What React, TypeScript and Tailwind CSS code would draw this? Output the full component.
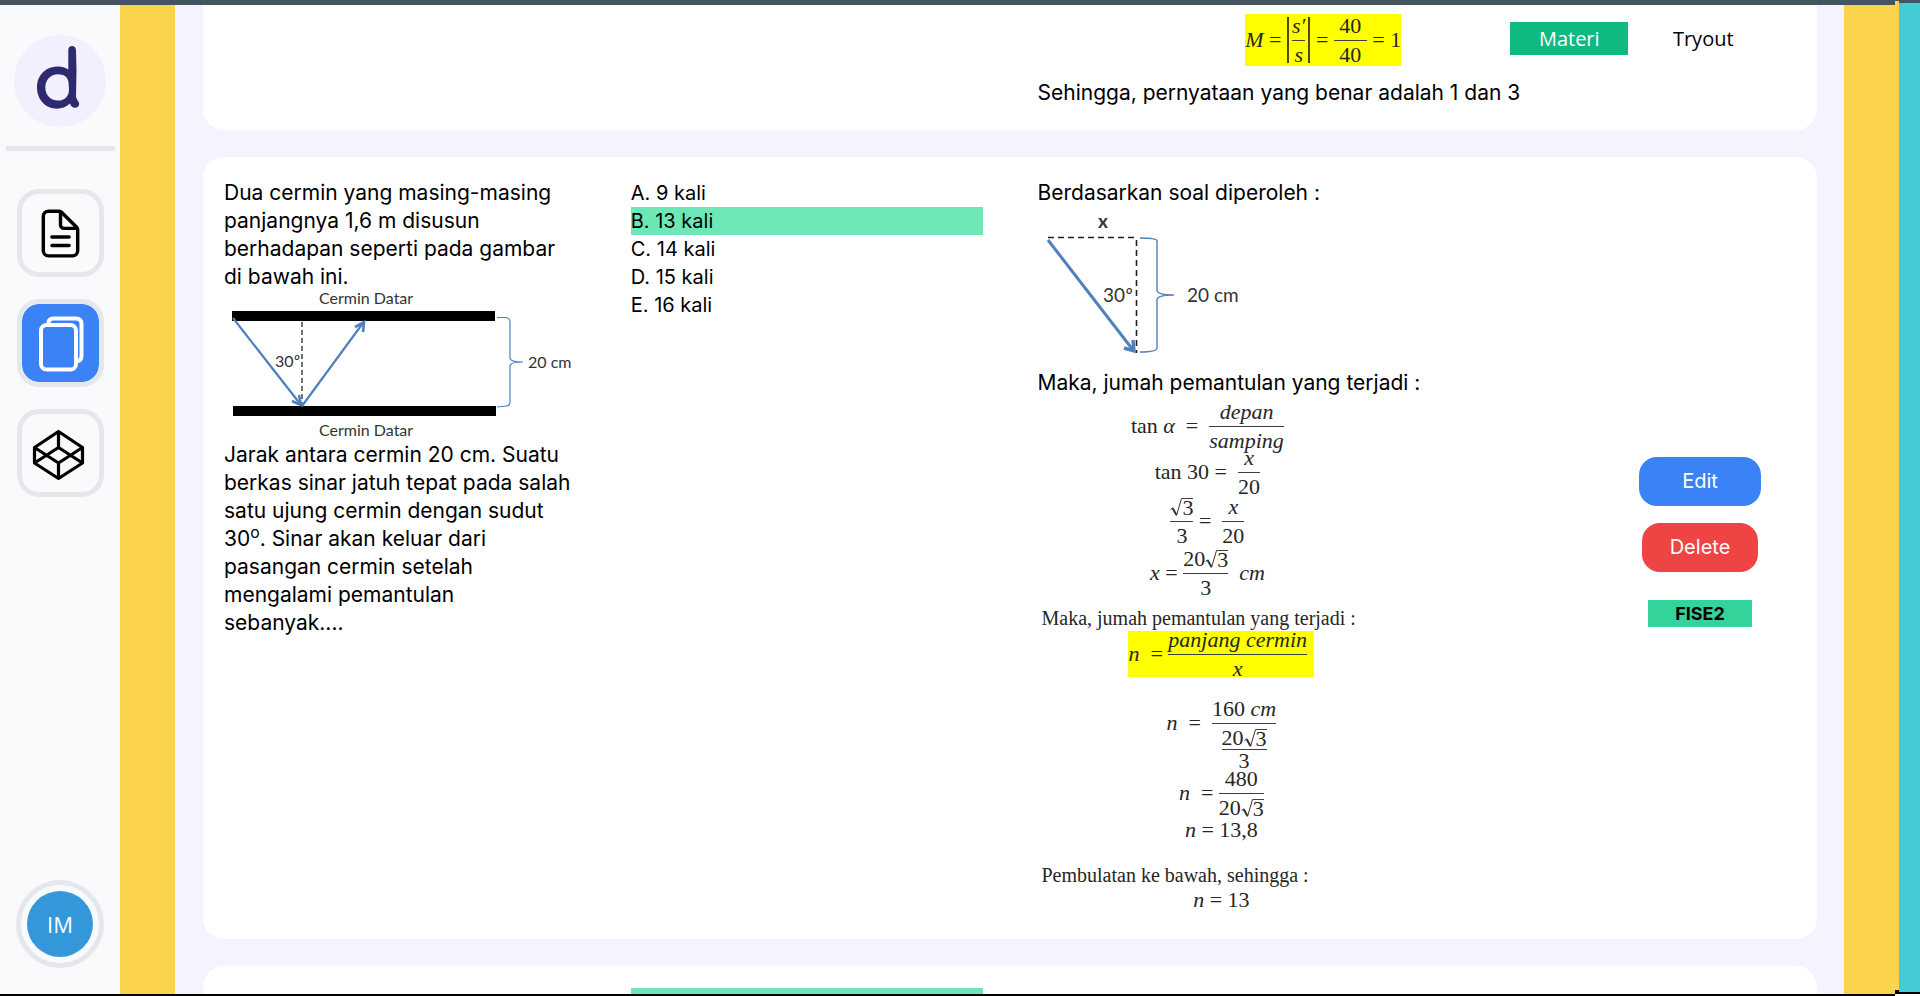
import type { ReactNode } from 'react';
import { IoDocumentTextOutline } from 'react-icons/io5';

function Frac({ top, tight = false, children }: { top: ReactNode; tight?: boolean; children: ReactNode }) {
  return (
    <span className="flex flex-col items-stretch leading-[17px]">
      <span className={`flex items-start justify-center whitespace-pre ${tight ? 'h-5' : 'h-[23px]'}`}>{top}</span>
      <span className={`flex items-start justify-center border-t border-neutral-700 ${tight ? 'pt-[2px]' : 'pt-[5px]'}`}>
        {children}
      </span>
    </span>
  );
}

function Root({ children }: { children: ReactNode }) {
  return (
    <span className="flex items-start">
      <svg viewBox="0 0 12 18" className="h-[18px] w-3" fill="none" stroke="#333" aria-hidden="true">
        <path d="M0.5 11.5 L2.5 10" strokeWidth="1" />
        <path d="M2.5 10 L6.5 17" strokeWidth="2" />
        <path d="M6.5 17.5 L11.5 0.5 H12" strokeWidth="1" />
      </svg>
      <span className="border-t border-neutral-700">{children}</span>
    </span>
  );
}

function Op({ children }: { children: ReactNode }) {
  return <span className="flex h-[46px] items-center whitespace-pre">{children}</span>;
}

function Equation({ tall = false, children }: { tall?: boolean; children: ReactNode }) {
  return (
    <div className={`flex items-start justify-center text-[22px] ${tall ? 'h-[52px] pt-[3px]' : 'h-[46px]'}`}>
      {children}
    </div>
  );
}

function MirrorDiagram() {
  return (
    <svg
      viewBox="224 290 350 150"
      className="block h-[150px] w-[350px] overflow-visible font-[Lato,sans-serif] text-base"
      role="img"
      aria-label="Dua cermin datar berjarak 20 cm"
    >
      <g fill="#333">
        <text x="319" y="303">Cermin Datar</text>
        <text x="319" y="435">Cermin Datar</text>
        <text x="275" y="366">30<tspan fontStyle="italic">º</tspan></text>
        <text x="528" y="367">20 cm</text>
      </g>
      <rect x="232" y="310" width="263" height="10" />
      <rect x="233" y="405" width="263" height="10" />
      <path d="M302 321V405" stroke="#444" strokeWidth="1.5" strokeDasharray="5 3" />
      <g fill="none" stroke="#4f81bd" strokeWidth="2.2">
        <path d="M233 317L301 404M302 405L363 322" />
        <path d="M292 400L301 404L299 394M355 326L364 321L363 331" strokeWidth="2.6" />
        <path d="M497 316.500H506Q510 317 510 321V357Q510 361 523 361Q510 361 510 365V401Q510 405 506 405L497 406" strokeWidth="1.2" />
      </g>
    </svg>
  );
}

function TriangleDiagram() {
  return (
    <svg
      viewBox="1037 206 350 162"
      className="block h-[162px] w-[350px] overflow-visible font-[Lato,sans-serif] text-[19px]"
      role="img"
      aria-label="Segitiga sinar dengan sudut 30 derajat"
    >
      <g fill="#333">
        <text x="1097" y="227" fontWeight="700">x</text>
        <text x="1102" y="301">30<tspan fontStyle="italic">º</tspan></text>
        <text x="1186" y="301">20 cm</text>
      </g>
      <path d="M1047 236.500H1134M1135.500 239V352" stroke="#222" strokeWidth="1.6" strokeDasharray="6 4" fill="none" />
      <g fill="none" stroke="#4f81bd">
        <path d="M1047 239L1132 349" strokeWidth="3" />
        <path d="M1123 347L1133 350L1132 339" strokeWidth="3.400" />
        <path d="M1139 237Q1156 237 1156 240V289Q1156 294 1173 294Q1156 294 1156 299V347Q1156 351 1139 351" strokeWidth="1.400" />
      </g>
    </svg>
  );
}

const answers = ['A. 9 kali', 'B. 13 kali', 'C. 14 kali', 'D. 15 kali', 'E. 16 kali'];
const serif = "font-['Liberation_Serif',serif] leading-[28px] text-neutral-800";
const card = 'grid grid-cols-4 gap-x-[55px] bg-white px-[21px]';
const prose = 'whitespace-nowrap text-[21px]';
const tile = 'flex h-[88px] w-[87px] items-center justify-center rounded-[22px] border-[5px] border-[#e5e7eb]';

function Sidebar() {
  return (
    <aside className="flex w-[120px] shrink-0 flex-col items-center bg-[#f9fafc] pt-[30px] pb-[26px]">
      <a href="#beranda" aria-label="Beranda" className="flex size-[92px] shrink-0 items-center justify-center rounded-full bg-[#f2f0ff]">
        <svg viewBox="14 35 92 92" className="size-[92px]" aria-hidden="true">
          <path
            fill="#2e2a6e"
            fillRule="evenodd"
            d="M68.300 50Q68.500 46 72 46Q76 46 76 51L76.500 70L76 97Q77 100 79 102.500Q79.800 107 75.500 107.800Q71.500 108 70 103.500Q64 108.700 57 108.700C45.500 108.700 37 99.500 37 87.500C37 75 46 66.600 58 66.600Q64 66.600 68.300 69.500ZM58 74.300C50.500 74.300 45.300 80 45.300 87.500C45.300 95 50.500 100.600 58 100.600C65 100.600 69 96 69 89.500L68.600 83C68.300 77.500 64.500 74.300 58 74.300Z"
          />
        </svg>
      </a>
      <hr className="mt-[19px] ml-px w-[109px] border-0 border-t-[5px] border-[#e5e7eb]" />
      <nav className="mt-[38px] flex flex-col gap-[22px]">
        <a href="#dokumen" aria-label="Dokumen" className={tile}>
          <IoDocumentTextOutline className="size-[55px] text-black" />
        </a>
        <a href="#kartu" aria-label="Kartu" className={`${tile} bg-[#3b82f6] bg-clip-padding`}>
          <svg viewBox="22 304 77 78" className="h-[78px] w-[77px]" fill="none" stroke="#fff" strokeWidth="4">
            <rect x="41" y="325" width="35" height="44.500" rx="5.500" />
            <path d="M48.500 324V323Q48.500 318.500 53.500 318.500H76Q81.500 318.500 81.500 324V355.500Q81.500 361 76.500 361.500" />
          </svg>
        </a>
        <a href="#kode" aria-label="Kode" className={tile}>
          <svg viewBox="22 414 77 78" className="h-[78px] w-[77px]" fill="none" stroke="#000" strokeWidth="3.200" strokeLinejoin="round">
            <path d="M58.500 431.500L82.500 447.500V463L58.500 478.500L34.500 463V447.500ZM34.500 447.500L58.500 463L82.500 447.500M34.500 463L58.500 447.500L82.500 463M58.500 431.500V447.500M58.500 463V478.500" />
          </svg>
        </a>
      </nav>
      <button aria-label="Profil" className="mt-auto flex size-[88px] shrink-0 items-center justify-center rounded-full border-[5px] border-[#e5e7eb]">
        <span className="flex size-[66px] items-center justify-center rounded-full bg-[#3498db] font-['Open_Sans',sans-serif] text-[22px] text-white">IM</span>
      </button>
    </aside>
  );
}

export default function App() {
  return (
    <div className="flex h-screen overflow-hidden bg-white font-[Inter,sans-serif] text-xl leading-[28px] text-black">
      <div className="relative flex min-w-0 flex-1 flex-col border-t-[5px] border-b-2 border-t-[#455560] border-b-black">
        <div className="flex min-h-0 flex-1">
          <Sidebar />
          <div className="w-[55px] shrink-0 bg-[#fcd34d]" />
          <main className="flex min-w-0 flex-1 flex-col gap-[27px] overflow-hidden bg-[#f5f3ff] pr-[27px] pl-[28px]">
            <section className={`${card} shrink-0 rounded-b-[21px] pt-[9px] pb-[23px]`}>
              <div className="col-start-3">
                <div className="flex justify-end">
                  <div className={`${serif} mr-[-12px] flex h-[52px] items-center bg-[#ffff00] text-[22px] whitespace-pre`}>
                    <Op><i>M</i>{' = '}</Op>
                    <span className="border-x-2 border-[#4d4d00] px-[3px]"><Frac top={<i>s′</i>}><i>s</i></Frac></span>
                    <Op>{' = '}</Op>
                    <Frac top=" 40 ">40</Frac>
                    <Op>{' = 1'}</Op>
                  </div>
                </div>
                <p className={`mt-[13px] ${prose}`}>Sehingga, pernyataan yang benar adalah 1 dan 3</p>
              </div>
              <div className="flex items-start gap-[16px] pt-2 pl-[66px] font-['Open_Sans',sans-serif] leading-[33px]">
                <button className="w-[118px] bg-[#10b981] text-white">Materi</button>
                <button className="w-[118px]">Tryout</button>
              </div>
            </section>

            <section className={`${card} shrink-0 rounded-[21px] pt-[22px] pb-[27px]`}>
              <div>
                <p className={prose}>
                  Dua cermin yang masing-masing
                  <br />
                  panjangnya 1,6 m disusun
                  <br />
                  berhadapan seperti pada gambar
                  <br />
                  di bawah ini.
                </p>
                <MirrorDiagram />
                <p className={prose}>
                  Jarak antara cermin 20 cm. Suatu
                  <br />
                  berkas sinar jatuh tepat pada salah
                  <br />
                  satu ujung cermin dengan sudut
                  <br />
                  30<sup>o</sup>. Sinar akan keluar dari
                  <br />
                  pasangan cermin setelah
                  <br />
                  mengalami pemantulan
                  <br />
                  sebanyak....
                </p>
              </div>

              <ul>
                {answers.map((answer) => (
                  <li key={answer} className={answer.startsWith('B') ? 'bg-[#6ee7b7]' : ''}>{answer}</li>
                ))}
              </ul>

              <div>
                <p className={prose}>Berdasarkan soal diperoleh :</p>
                <TriangleDiagram />
                <p className={prose}>Maka, jumah pemantulan yang terjadi :</p>
                <div className={`${serif} mt-[6px] pr-3`}>
                  <Equation>
                    <Op>{'tan '}<i>α</i>{'  =  '}</Op>
                    <Frac top={<i>depan</i>}><i>samping</i></Frac>
                  </Equation>
                  <Equation>
                    <Op>{'tan 30 =  '}</Op>
                    <Frac top={<i>x</i>}>20</Frac>
                  </Equation>
                  <Equation tall>
                    <Frac top={<Root>3</Root>}>3</Frac>
                    <Op>{' =  '}</Op>
                    <Frac top={<i>x</i>}>20</Frac>
                  </Equation>
                  <Equation tall>
                    <Op><i>x</i>{' = '}</Op>
                    <Frac top={<>20<Root>3</Root></>}>3</Frac>
                    <Op><i>{'  cm'}</i></Op>
                  </Equation>
                </div>
                <div className={`${serif} mt-[6px] pl-4`}>
                  <p className="-ml-3 leading-[26px] whitespace-nowrap">Maka, jumah pemantulan yang terjadi :</p>
                  <div className="mx-auto flex h-[46px] w-[186px] items-start bg-[#ffff00] text-[22px]">
                    <Op><i>n</i>{'  = '}</Op>
                    <Frac top={<i>panjang cermin</i>}><i>x</i></Frac>
                  </div>
                  <div className="mt-[23px] flex h-[70px] items-start justify-center text-[22px]">
                    <Op><i>n</i>{'  =  '}</Op>
                    <Frac top={<span>160 <i>cm</i></span>}>
                      <Frac tight top={<>20<Root>3</Root></>}>3</Frac>
                    </Frac>
                  </div>
                  <Equation>
                    <Op><i>n</i>{'  = '}</Op>
                    <Frac top="480">20<Root>3</Root></Frac>
                  </Equation>
                  <p className="text-center text-[22px] whitespace-pre"><i>n</i>{' = 13,8'}</p>
                  <p className="mt-[18px] -ml-3 leading-[26px]">Pembulatan ke bawah, sehingga :</p>
                  <p className="text-center text-[22px] leading-[24px] whitespace-pre"><i>n</i>{' = 13'}</p>
                </div>
              </div>

              <div className="ml-auto flex w-[192px] flex-col items-center self-center pb-[8px]">
                <button className="h-[49px] w-[122px] rounded-[18px] bg-[#3b82f6] text-white">Edit</button>
                <button className="mt-[17px] h-[49px] w-[116px] rounded-[18px] bg-[#ef4444] text-white">Delete</button>
                <span className="mt-[28px] w-[104px] bg-[#34d399] text-center text-lg leading-[27px] font-bold">FISE2</span>
              </div>
            </section>

            <section className={`${card} shrink-0 rounded-t-[21px] pt-[22px]`}>
              <div className="col-start-2 h-7 bg-[#6ee7b7]" />
            </section>
          </main>
          <div className="w-[51px] shrink-0 bg-[#fcd34d]" />
        </div>
      </div>
      <div className="mb-[2px] w-1 shrink-0 border-t border-b-4 border-t-[#455560] border-b-black bg-[#fcd34d]" />
      <div className="mb-[2px] w-[21px] shrink-0 border-t-[3px] border-b-2 border-t-[#455560] border-b-black bg-[#43ccd3]" />
    </div>
  );
}
